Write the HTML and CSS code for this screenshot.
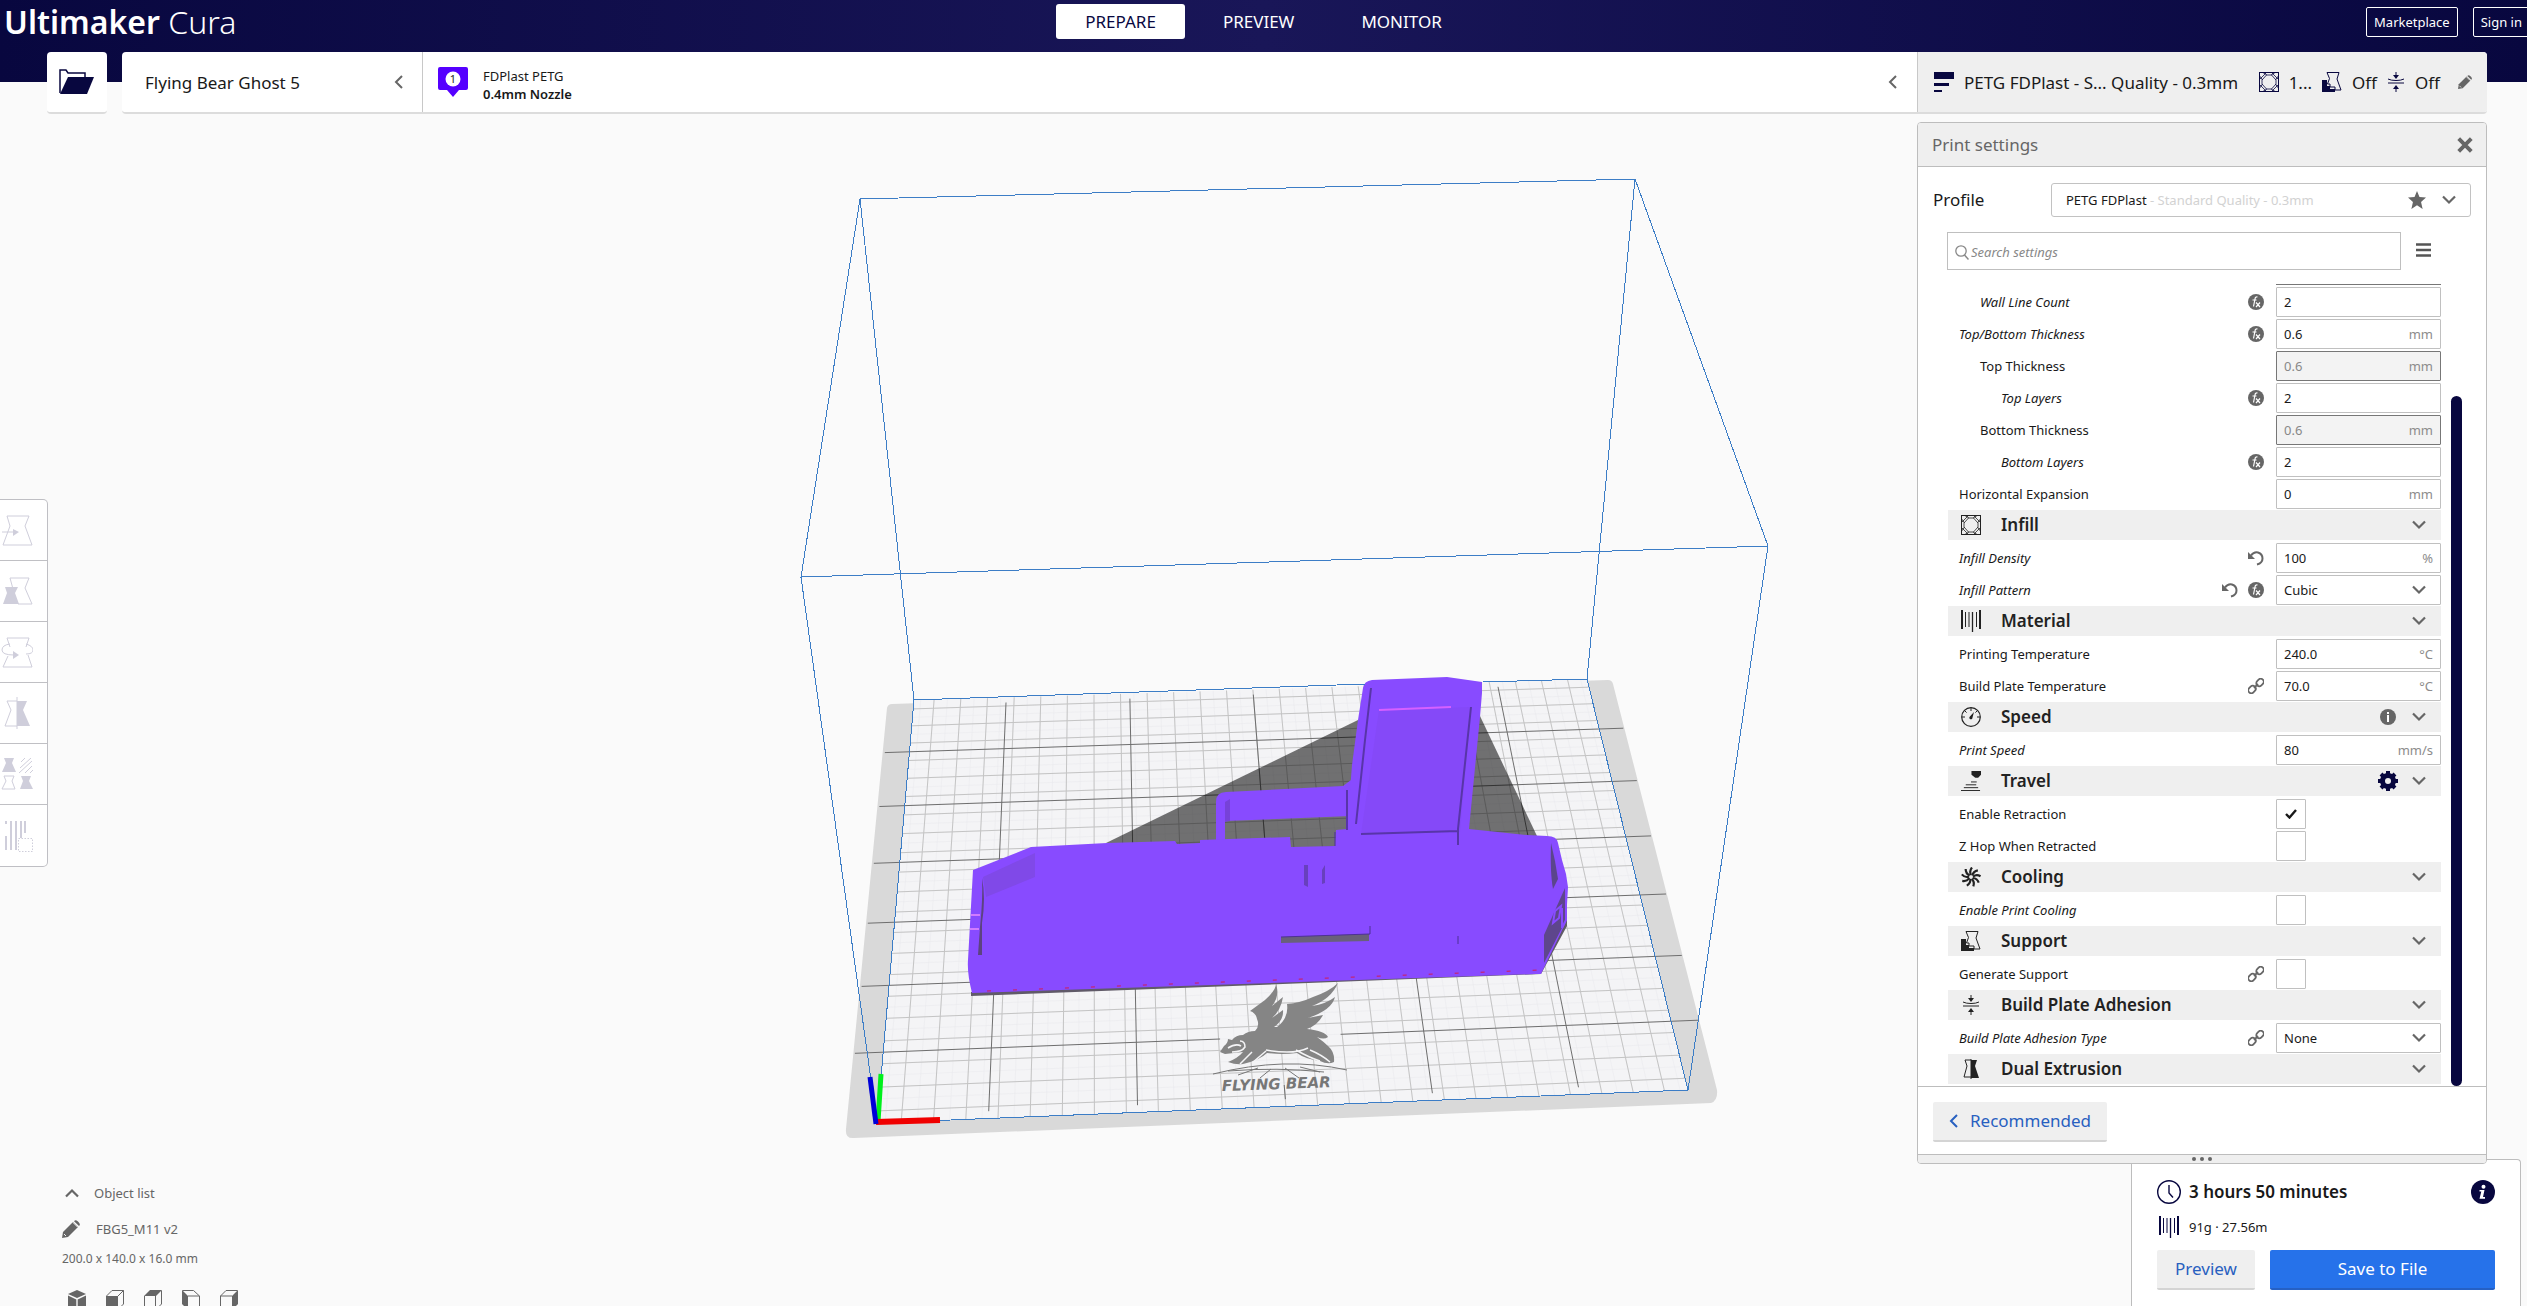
FILE: index.html
```html
<!DOCTYPE html>
<html lang="en">
<head>
<meta charset="utf-8">
<title>Ultimaker Cura</title>
<link rel="stylesheet" href="styles.css">
<script src="scene.js" defer></script>
</head>
<body>
<svg class="sprites" aria-hidden="true">
  <symbol id="i-left" viewBox="0 0 10 14"><path d="M8 1 2 7l6 6" fill="none" stroke="currentColor" stroke-width="2"/></symbol>
  <symbol id="i-down" viewBox="0 0 14 10"><path d="M1 1.500l6 6 6-6" fill="none" stroke="currentColor" stroke-width="2.200"/></symbol>
  <symbol id="i-up" viewBox="0 0 14 10"><path d="M1 8.500l6-6 6 6" fill="none" stroke="currentColor" stroke-width="2.200"/></symbol>
  <symbol id="i-folder" viewBox="0 0 36 26"><path d="M1 24V1h6l2 3h17v4" fill="none" stroke="currentColor" stroke-width="1.500"/><path d="M1 25 9 8h26l-7 17z" fill="currentColor"/></symbol>
  <symbol id="i-pencil" viewBox="0 0 18 18"><path d="M0 18l1-6L11 2l5 5L6 17z" fill="currentColor"/><path d="M12 1.200q1.500-2 3.700 0l1 1q2.200 2.200.3 3.800z" fill="currentColor"/><path d="M11 2.500l4.500 4.500M2 14l2 2" stroke="#f4f4f4" stroke-width="1" /></symbol>
  <symbol id="i-close" viewBox="0 0 14 14"><path d="M1.500 1.500l11 11M12.500 1.500l-11 11" stroke="currentColor" stroke-width="3.400"/></symbol>
  <symbol id="i-quality" viewBox="0 0 20 20"><path d="M0 0h20v7H0zM0 11h15v3H0zM0 18h8v2H0z" fill="currentColor"/></symbol>
  <symbol id="i-infill" viewBox="0 0 20 20"><rect x=".5" y=".5" width="19" height="19" fill="none" stroke="currentColor"/><path d="M7.500 3h5L17 8v4l-4.500 5h-5L3 12V8zM0 8 8 0M12 0l8 8M0 12l8 8M20 12l-8 8M0 3l3.500 5M20 3l-3.500 5M0 17l3.500-5M20 17l-3.500-5M3 0l5 3M17 0l-5 3M3 20l5-3M17 20l-5-3" fill="none" stroke="currentColor" stroke-width=".8"/></symbol>
  <symbol id="i-material" viewBox="0 0 20 22"><path d="M1 0v19M19 0v19" stroke="currentColor" stroke-width="2"/><path d="M4.500 2v15M8 2v15M15.500 2v15" stroke="currentColor" stroke-width="1"/><path d="M11.500 2v20" stroke="currentColor" stroke-width="1.300"/></symbol>
  <symbol id="i-speed" viewBox="0 0 20 20"><circle cx="10" cy="10" r="9.300" fill="none" stroke="currentColor" stroke-width="1.200"/><path d="M10 1v3M3.600 3.600l2 2M16.400 3.600l-2 2M1 10h3M16 10h3" stroke="currentColor"/><path d="M13 5l-1.500 5.500a1.600 1.600 0 1 1-2.600-1z" fill="currentColor"/></symbol>
  <symbol id="i-travel" viewBox="0 0 21 21"><path d="M11 0h10v4l-3 3h-3l-4-3z" fill="currentColor"/><path d="M10.500 11.500h6M5 14.500h11M3 17.500h15M0 20.500h20" stroke="currentColor"/></symbol>
  <symbol id="i-cooling" viewBox="-10 -10 20 20"><g fill="none" stroke="currentColor" stroke-width="2.200"><path d="M0-2Q-2-6 1-9.500"/><path d="M0-2Q-2-6 1-9.500" transform="rotate(40)"/><path d="M0-2Q-2-6 1-9.500" transform="rotate(80)"/><path d="M0-2Q-2-6 1-9.500" transform="rotate(120)"/><path d="M0-2Q-2-6 1-9.500" transform="rotate(160)"/><path d="M0-2Q-2-6 1-9.500" transform="rotate(200)"/><path d="M0-2Q-2-6 1-9.500" transform="rotate(240)"/><path d="M0-2Q-2-6 1-9.500" transform="rotate(280)"/><path d="M0-2Q-2-6 1-9.500" transform="rotate(320)"/></g></symbol>
  <symbol id="i-support" viewBox="0 0 20 20"><path d="M0 8h5v6h3v3h5v3H0z" fill="currentColor"/><path d="M5 .5h12l-2 6.500 4 11h-6v-3H8v-3H5.500l2-5.500z" fill="none" stroke="currentColor"/></symbol>
  <symbol id="i-adhesion" viewBox="0 0 18 20"><path d="M9 0v4M9 16v4" stroke="currentColor"/><path d="M6 3h6L9 7zM6 17h6l-3-4z" fill="currentColor"/><path d="M1 7q3 1.500 8 1.500T17 7M1 11h16" fill="none" stroke="currentColor"/></symbol>
  <symbol id="i-dual" viewBox="0 0 20 20"><path d="M10 1H4l2 6-3 11h7" fill="none" stroke="currentColor"/><path d="M10 1h6l-2 6 4 12h-8zM9.500 0h1v20h-1z" fill="currentColor"/></symbol>
  <symbol id="i-fx" viewBox="0 0 16 16"><circle cx="8" cy="8" r="8" fill="currentColor"/><path d="M9.500 3Q7.300 2.500 7 5L5.500 12.500M4.500 6H8.500M8 8.500l4 4.500M12 8.500l-4 4.500" fill="none" stroke="#fff" stroke-width="1.200"/></symbol>
  <symbol id="i-reset" viewBox="0 0 16 16"><path d="M3 5.500Q6 1.500 10 2.500q4.500 1.500 4.500 6T9 14.500" fill="none" stroke="currentColor" stroke-width="2"/><path d="M0 2v7h7z" fill="currentColor"/></symbol>
  <symbol id="i-link" viewBox="0 0 16 16"><g fill="none" stroke="currentColor" stroke-width="1.800"><rect x="8" y="1.500" width="8" height="6" rx="3" transform="rotate(-45 12 4.500)"/><rect x="0" y="8.500" width="8" height="6" rx="3" transform="rotate(-45 4 11.500)"/><path d="M6 10l4-4"/></g></symbol>
  <symbol id="i-info" viewBox="0 0 16 16"><circle cx="8" cy="8" r="8" fill="currentColor"/><path d="M7 3h2v2H7zM7 6h2v7H7z" fill="#fff"/></symbol>
  <symbol id="i-infob" viewBox="0 0 24 24"><circle cx="12" cy="12" r="12" fill="currentColor"/><circle cx="12.500" cy="6.700" r="2" fill="#fff"/><path d="M8.500 10h5l-1.500 7h2v1.800H8.500L10.300 11.500H8.500z" fill="#fff"/></symbol>
  <symbol id="i-gear" viewBox="-10 -10 20 20"><circle r="5.500" fill="none" stroke="currentColor" stroke-width="5"/><path d="M0-10v4M0 10V6M-10 0h4M10 0H6M-7-7l3 3M7-7 4-4M-7 7l3-3M7 7 4 4" stroke="currentColor" stroke-width="4"/></symbol>
  <symbol id="i-star" viewBox="0 0 16 16"><path d="M8 0l2.200 5.400 5.800.4-4.400 3.900L13 16l-5-3.300L3 16l1.400-6.300L0 5.800l5.800-.4z" fill="currentColor"/></symbol>
  <symbol id="i-search" viewBox="0 0 14 15"><circle cx="6" cy="6" r="5.200" fill="none" stroke="currentColor" stroke-width="1.300"/><path d="M9.500 10l4 4.500" stroke="currentColor" stroke-width="1.500"/></symbol>
  <symbol id="i-menu" viewBox="0 0 15 14"><path d="M0 1.500h15M0 7h15M0 12.500h15" stroke="currentColor" stroke-width="2.400"/></symbol>
  <symbol id="i-clock" viewBox="0 0 24 24"><circle cx="12" cy="12" r="11.300" fill="none" stroke="currentColor" stroke-width="1.400"/><path d="M12 5v8l4 4.500" fill="none" stroke="currentColor" stroke-width="1.400"/></symbol>
  <symbol id="i-check" viewBox="0 0 12 10"><path d="M1 5l3.500 3.500L11 1" fill="none" stroke="currentColor" stroke-width="2.400"/></symbol>
  <symbol id="t-move" viewBox="0 0 32 32"><path d="M6 2h22l-4 10 7 19H2L9 12z" fill="none" stroke="currentColor"/><path d="M1 18h12" stroke="currentColor"/><path d="M12 15l6 3-6 4z" fill="currentColor"/></symbol>
  <symbol id="t-scale" viewBox="0 0 32 32"><path d="M12 14 9 3h19l-4 10 7 16H17" fill="none" stroke="currentColor"/><path d="M4 12h13l-3 6 4 11H2l4-11z" fill="currentColor"/></symbol>
  <symbol id="t-rotate" viewBox="0 0 32 32"><path d="M9 11 6 2h22l-3 9M7 20 2 31h29l-4-12M9 8Q1 9 1 14t12 5M25 8q7 2 7 6t-7 4" fill="none" stroke="currentColor"/><path d="M12 15l6 4-6 4z" fill="currentColor"/></symbol>
  <symbol id="t-mirror" viewBox="0 0 32 32"><path d="M16 4H6l4 9-6 16h12M16 0v32" fill="none" stroke="currentColor"/><path d="M16 4h10l-4 9 7 16H16z" fill="currentColor"/></symbol>
  <symbol id="t-mesh" viewBox="0 0 32 32"><path d="M3 0h10l-2 5 4 9H1l4-9zM20 18h10l-2 5 4 8H19l3-8z" fill="currentColor"/><path d="M3 18h10l-2 5 3 8H1l4-8zM20 4l4-4M19 10 30 0M18 15 31 3M24 15l7-7M29 15l3-3" fill="none" stroke="currentColor"/></symbol>
  <symbol id="t-block" viewBox="0 0 32 32"><path d="M5 1v3M5 16v14M10 1v29M15 1v29M20 1v17M24 1v12" stroke="currentColor" stroke-width="2"/><path d="M17.500 18.500h14v13h-14z" fill="none" stroke="currentColor" stroke-dasharray="1.500 1.500"/></symbol>
  <symbol id="c-3d" viewBox="0 0 18 20"><path d="M9 0l9 4-9 4-9-4zM0 5.500l8.300 4V20L0 16zM18 5.500l-8.300 4V20L18 16z" fill="currentColor"/></symbol>
  <symbol id="c-front" viewBox="0 0 18 20"><path d="M0 6h12v14H0z" fill="currentColor"/><path d="M.5 6 6 .5h11.500L12 6M17.500.5V14L12 19.500" fill="none" stroke="currentColor"/></symbol>
  <symbol id="c-top" viewBox="0 0 18 20"><path d="M0 6 6 0h12l-6 6z" fill="currentColor"/><path d="M.5 6v13.500h11V6M17.500.5V14L12 19.500" fill="none" stroke="currentColor"/></symbol>
  <symbol id="c-left" viewBox="0 0 18 20"><path d="M0 0l6 6v14l-6-6z" fill="currentColor"/><path d="M.5.500h11L17.500 6H6M17.500 6v13.500H6" fill="none" stroke="currentColor"/></symbol>
  <symbol id="c-right" viewBox="0 0 18 20"><path d="M18 0l-6 6v14l6-6z" fill="currentColor"/><path d="M.5 6 6 .5h11.500M.5 6v13.500H12M.5 6H12" fill="none" stroke="currentColor"/></symbol>
</svg>

<svg class="scene" viewBox="0 0 2527 1306" preserveAspectRatio="xMidYMin slice" role="img" aria-label="Build plate with loaded model">
  <path d="M892 704 1608 680q4 0 5 4L1717 1090q1 11-6 13L854 1138q-9 1-8-9L887 708q1-4 5-4z" fill="#d9d9d9"/>
  <path d="M877 1123 1688 1090 1587 679 914 700z" fill="#f4f4f6"/>
  <path id="grid-fine" class="fine"/>
  <path id="grid-thin" class="thin"/>
  <path id="grid-thick" class="thick"/>
  <g class="bear">
    <path d="M1276 984Q1276 990 1265 1000L1250 1011Q1256 1013 1257 1019 1260 1026 1255 1031 1248 1031 1243 1035 1236 1035 1232 1040L1228 1039Q1228 1043 1224 1046L1220 1052 1225 1054 1243 1052Q1238 1058 1228 1062 1236 1065 1243 1064 1260 1060 1267 1053 1282 1055 1297 1053 1305 1059 1320 1061 1328 1065 1334 1062 1335 1052 1328 1046 1324 1042 1317 1037 1324 1040 1328 1037 1325 1031 1307 1029 1318 1025 1323 1015L1308 1018Q1332 1010 1335 997 1326 1004 1312 1006 1331 999 1338 983 1330 991 1313 997 1300 1003 1287 1004 1289 1018 1277 1027H1274Q1284 1020 1283 1010L1272 1018Q1281 1010 1283 997L1272 1006Q1280 996 1276 984z"/>
    <path d="M1228 1048q8-5 13-2M1232 1052q10 0 13-5 0-6-5-6M1240 1064l12-12M1252 1063l14-12M1266 1050q28 5 42-2M1296 1050q14 8 24 11M1310 1050q12 5 20 12" fill="none" stroke="#f4f4f6" stroke-width="1.500"/>
    <path d="M1213 1074q72-18 134-4M1228 1071q50-4 96 1M1238 1075l20-7M1260 1078l11-9M1285 1068l14 10M1300 1067l20 5" fill="none" stroke="#777" stroke-width="1"/>
    <text x="1222" y="1091" transform="rotate(-2 1222 1091)">FLYING BEAR</text>
  </g>
  <path d="M1106 843 1358 720 1480 716 1537 836 1290 850z" fill="#000" fill-opacity=".54"/>
  <path d="M971 992v4L1541 974 1567 926V915L1536 968z" fill="#605a68"/>
  <g fill="#884bff">
    <path d="M1216 842V802q0-10 10-10L1343 786l8-6v36L1225 821v21z"/>
    <path d="M973 870 1031 847 1107 843 1175 841 1177 844 1200 843V840L1290 837 1291 847 1335 846 1336 830 1347 829 1352 765 1358 720 1363 688q1-7 9-8L1447 677 1482 682V693L1480 717 1469 829 1527 835 1547 836q10 0 11 7l4 17 4 14 2 13-2 35-25 52-5 0L972 993q-5-20-4-33z"/>
  </g>
  <path d="M983 877l52-24v24l-49 20z" fill="#8049e8"/>
  <path d="M982 878q4 20 0 45l0 32h-4l2-28q3-28 2-49z" fill="#5c4380"/>
  <path d="M971 915h9M970 929h9" stroke="#d17bff" stroke-width="2"/>
  <path d="M1379 710l92-3-11 125-99 2z" fill="#8549f8"/>
  <path d="M1371 688 1365 740 1356 824M1471 707 1458 829V845M1361 834 1458 831M1347 790V830" fill="none" stroke="#5835a8" stroke-width="2"/>
  <path d="M1379 710 1451 707" stroke="#d660ff" stroke-width="2"/>
  <path d="M1225 802v20l5-1v-22z" fill="#7742d8"/>
  <path d="M1281 937 1369 934V941L1281 943z" fill="#69607a"/>
  <path d="M1281 937 1370 934V926M1458 936v8M1335 832v14" stroke="#4d3195" stroke-width="1" fill="none"/>
  <path d="M1304 865v20l4 2v-22zM1325 865l-3 5v14l3-1z" fill="#6840bd"/>
  <path d="M1551 843q-1 30 2 46l5-10-3-18z" fill="#5b458c"/>
  <path d="M1565 888 1544 935v28l22-43z" fill="#5e468c"/>
  <path d="M1566 888v32l-4 8 0-20M1561 906l-2 12-6 5 2-12z" stroke="#884bff" stroke-width="2" fill="none"/>
  <path d="M987 991 1540 970" stroke="#d01c58" stroke-width="1" stroke-dasharray="4 22"/>
  <path class="volume" d="M860 199 1635 179 1768 546 801 577zM877 1123 1688 1090 1587 679M1365 684 914 700 877 1123 801 577M860 199 914 700M1635 179 1587 679 1483 682M1768 546 1688 1090"/>
  <path d="M878 1122 881 1074" stroke="#00f01c" stroke-width="5"/>
  <path d="M876 1122 940 1120" stroke="#f00000" stroke-width="6"/>
  <path d="M876 1124 870 1077" stroke="#0000d8" stroke-width="5"/>
</svg>

<header class="top">
  <h1 class="brand"><b>Ultimaker</b> Cura</h1>
  <nav class="tabs">
    <button class="tab active">PREPARE</button>
    <button class="tab">PREVIEW</button>
    <button class="tab">MONITOR</button>
  </nav>
  <div class="account">
    <button>Marketplace</button>
    <button>Sign in</button>
  </div>
</header>

<section class="stagebar">
  <button class="open" aria-label="Open file"><svg width="36" height="26"><use href="#i-folder"/></svg></button>
  <div class="selectors">
    <button class="machine"><span>Flying Bear Ghost 5</span><svg width="10" height="14"><use href="#i-left"/></svg></button>
    <button class="config">
      <svg class="extruder" width="30" height="30" viewBox="0 0 30 30"><path d="M2 0h26q2 0 2 2v19q0 2-2 2h-7l-6 7-6-7H2q-2 0-2-2V2q0-2 2-2z" fill="#5500ff"/><circle cx="15" cy="12" r="7.500" fill="#fff"/><text x="15" y="16" text-anchor="middle">1</text></svg>
      <span class="material"><span>FDPlast PETG</span><b>0.4mm Nozzle</b></span>
      <svg width="10" height="14"><use href="#i-left"/></svg>
    </button>
    <button class="summary">
      <svg width="20" height="20"><use href="#i-quality"/></svg>
      <span class="quality">PETG FDPlast - S... Quality - 0.3mm</span>
      <svg width="20" height="20"><use href="#i-infill"/></svg><span>1...</span>
      <svg width="20" height="20"><use href="#i-support"/></svg><span>Off</span>
      <svg width="18" height="20"><use href="#i-adhesion"/></svg><span>Off</span>
      <svg class="edit" width="14" height="14"><use href="#i-pencil"/></svg>
    </button>
  </div>
</section>

<main class="workspace">
  <div class="left">
    <div class="tools">
      <button aria-label="Move"><svg><use href="#t-move"/></svg></button>
      <button aria-label="Scale"><svg><use href="#t-scale"/></svg></button>
      <button aria-label="Rotate"><svg><use href="#t-rotate"/></svg></button>
      <button aria-label="Mirror"><svg><use href="#t-mirror"/></svg></button>
      <button aria-label="Per model settings"><svg><use href="#t-mesh"/></svg></button>
      <button aria-label="Support blocker"><svg><use href="#t-block"/></svg></button>
    </div>
    <div class="objects">
      <button class="objtoggle"><svg width="14" height="10"><use href="#i-up"/></svg>Object list</button>
      <button class="objname"><svg width="18" height="18"><use href="#i-pencil"/></svg>FBG5_M11 v2</button>
      <p>200.0 x 140.0 x 16.0 mm</p>
      <div class="views">
        <button aria-label="3D view"><svg><use href="#c-3d"/></svg></button>
        <button aria-label="Front view"><svg><use href="#c-front"/></svg></button>
        <button aria-label="Top view"><svg><use href="#c-top"/></svg></button>
        <button aria-label="Left view"><svg><use href="#c-left"/></svg></button>
        <button aria-label="Right view"><svg><use href="#c-right"/></svg></button>
      </div>
    </div>
  </div>

  <div class="right">
    <section class="panel">
      <header class="panelhead"><h2>Print settings</h2><button aria-label="Close"><svg width="16" height="16"><use href="#i-close"/></svg></button></header>
      <div class="profile">
        <span>Profile</span>
        <button class="combo"><span>PETG FDPlast <i>- Standard Quality - 0.3mm</i></span><svg width="18" height="18"><use href="#i-star"/></svg><svg width="14" height="10"><use href="#i-down"/></svg></button>
      </div>
      <div class="find">
        <label class="search"><svg width="14" height="15"><use href="#i-search"/></svg><input type="text" placeholder="Search settings" aria-label="Search settings"></label>
        <button aria-label="Setting visibility"><svg width="15" height="14"><use href="#i-menu"/></svg></button>
      </div>
      <div class="scroll">
        <div class="list">
          <div class="clipped"></div>
          <div class="row l1 it"><label for="f1">Wall Line Count</label><svg><use href="#i-fx"/></svg><span class="field"><input id="f1" value="2"></span></div>
          <div class="row it"><label for="f2">Top/Bottom Thickness</label><svg><use href="#i-fx"/></svg><span class="field"><input id="f2" value="0.6"><span>mm</span></span></div>
          <div class="row l1"><label for="f3">Top Thickness</label><span class="field off"><input id="f3" value="0.6" disabled><span>mm</span></span></div>
          <div class="row l2 it"><label for="f4">Top Layers</label><svg><use href="#i-fx"/></svg><span class="field"><input id="f4" value="2"></span></div>
          <div class="row l1"><label for="f5">Bottom Thickness</label><span class="field off"><input id="f5" value="0.6" disabled><span>mm</span></span></div>
          <div class="row l2 it"><label for="f6">Bottom Layers</label><svg><use href="#i-fx"/></svg><span class="field"><input id="f6" value="2"></span></div>
          <div class="row"><label for="f7">Horizontal Expansion</label><span class="field"><input id="f7" value="0"><span>mm</span></span></div>
          <button class="cat"><svg width="20" height="20"><use href="#i-infill"/></svg><span>Infill</span><svg class="chev"><use href="#i-down"/></svg></button>
          <div class="row it"><label for="f8">Infill Density</label><svg><use href="#i-reset"/></svg><span class="field"><input id="f8" value="100"><span>%</span></span></div>
          <div class="row it"><label for="f9">Infill Pattern</label><svg><use href="#i-reset"/></svg><svg><use href="#i-fx"/></svg><span class="field pick"><select id="f9"><option>Cubic</option></select><svg class="chev"><use href="#i-down"/></svg></span></div>
          <button class="cat"><svg width="20" height="22"><use href="#i-material"/></svg><span>Material</span><svg class="chev"><use href="#i-down"/></svg></button>
          <div class="row"><label for="f10">Printing Temperature</label><span class="field"><input id="f10" value="240.0"><span>°C</span></span></div>
          <div class="row"><label for="f11">Build Plate Temperature</label><svg><use href="#i-link"/></svg><span class="field"><input id="f11" value="70.0"><span>°C</span></span></div>
          <button class="cat"><svg width="20" height="20"><use href="#i-speed"/></svg><span>Speed</span><svg class="note" width="16" height="16"><use href="#i-info"/></svg><svg class="chev"><use href="#i-down"/></svg></button>
          <div class="row it"><label for="f12">Print Speed</label><span class="field"><input id="f12" value="80"><span>mm/s</span></span></div>
          <button class="cat"><svg width="20" height="20"><use href="#i-travel"/></svg><span>Travel</span><svg class="gear" width="20" height="20"><use href="#i-gear"/></svg><svg class="chev"><use href="#i-down"/></svg></button>
          <div class="row"><label for="f13">Enable Retraction</label><span class="tick"><input type="checkbox" id="f13" checked><svg width="12" height="10"><use href="#i-check"/></svg></span></div>
          <div class="row"><label for="f14">Z Hop When Retracted</label><span class="tick"><input type="checkbox" id="f14"></span></div>
          <button class="cat"><svg width="20" height="20"><use href="#i-cooling"/></svg><span>Cooling</span><svg class="chev"><use href="#i-down"/></svg></button>
          <div class="row it"><label for="f15">Enable Print Cooling</label><span class="tick"><input type="checkbox" id="f15"></span></div>
          <button class="cat"><svg width="20" height="20"><use href="#i-support"/></svg><span>Support</span><svg class="chev"><use href="#i-down"/></svg></button>
          <div class="row"><label for="f16">Generate Support</label><svg><use href="#i-link"/></svg><span class="tick"><input type="checkbox" id="f16"></span></div>
          <button class="cat"><svg width="20" height="20"><use href="#i-adhesion"/></svg><span>Build Plate Adhesion</span><svg class="chev"><use href="#i-down"/></svg></button>
          <div class="row it"><label for="f17">Build Plate Adhesion Type</label><svg><use href="#i-link"/></svg><span class="field pick"><select id="f17"><option>None</option></select><svg class="chev"><use href="#i-down"/></svg></span></div>
          <button class="cat"><svg width="20" height="20"><use href="#i-dual"/></svg><span>Dual Extrusion</span><svg class="chev"><use href="#i-down"/></svg></button>
        </div>
        <div class="thumb"></div>
      </div>
      <footer class="mode"><button class="secondary"><svg width="10" height="14"><use href="#i-left"/></svg>Recommended</button></footer>
      <div class="grip"><i></i><i></i><i></i></div>
    </section>

    <section class="job">
      <div class="time"><svg width="24" height="24"><use href="#i-clock"/></svg><b>3 hours 50 minutes</b><button aria-label="Details"><svg width="24" height="24"><use href="#i-infob"/></svg></button></div>
      <div class="usage"><svg width="24" height="22"><use href="#i-material"/></svg><span>91g · 27.56m</span></div>
      <div class="actions"><button class="secondary">Preview</button><button class="primary">Save to File</button></div>
    </section>
  </div>
</main>
</body>
</html>
```
FILE: styles.css
```css
* { box-sizing: border-box; }
body {
  margin: 0;
  height: 100vh;
  display: flex;
  flex-direction: column;
  position: relative;
  overflow: hidden;
  background: #fafafa;
  color: #191919;
  font: 13px/18px "Noto Sans", "Open Sans", sans-serif;
}
button, input, select { font: inherit; color: inherit; margin: 0; }
button { border: 0; padding: 0; background: none; text-align: left; }
svg { flex: none; display: block; }
h1, h2, p { margin: 0; font-weight: 400; }
.sprites { position: absolute; width: 0; height: 0; }

/* 3D view behind everything */
.scene { position: absolute; inset: 0; width: 100%; height: 100%; }
.fine { fill: none; stroke: #e9e9ee; stroke-width: 1; opacity: .5; }
.thin { fill: none; stroke: #c4c4c4; stroke-width: 1; }
.thick { fill: none; stroke: #6e6e6e; stroke-width: 1; }
.bear { fill: #858585; }
.bear text { font: italic bold 15px "DejaVu Sans", sans-serif; fill: #777; }
.volume { fill: none; stroke: #3c7dc6; stroke-width: 1; shape-rendering: crispEdges; }

/* Top bar */
.top {
  position: relative;
  height: 82px;
  flex: none;
  display: grid;
  grid-template-columns: 1fr auto 1fr;
  align-items: start;
  background: linear-gradient(90deg, #08073f, #191658 50%, #08073f);
  color: #fff;
}
.brand { padding-left: 4px; font-size: 32px; line-height: 44px; font-weight: 300; }
.brand b { font-weight: 600; }
.tabs { display: flex; gap: 9px; padding-top: 4px; }
.tab { height: 35px; padding: 0 29px; font-size: 17px; border-radius: 3px; }
.tab.active { background: #fff; color: #08073f; }
.account { display: flex; justify-content: flex-end; gap: 15px; margin-right: -3px; padding-top: 7px; }
.account button { height: 30px; padding: 0 7px; border: 1px solid #fff; border-radius: 2px; }

/* Selector bar */
.stagebar { position: relative; flex: none; display: flex; gap: 15px; height: 62px; margin: -30px 40px 0 47px; }
.open {
  width: 60px; display: grid; place-items: center; background: #fff; color: #08073f;
  border-bottom: 2px solid #dcdcdc; border-radius: 4px;
}
.selectors { flex: 1; display: flex; border-radius: 4px; overflow: hidden; background: #fff; border-bottom: 2px solid #dcdcdc; }
.selectors > button { display: flex; align-items: center; }
.selectors svg { color: #666; }
.selectors span { padding-top: 1px; }
.machine { width: 301px; padding: 0 18px 0 23px; justify-content: space-between; font-size: 17px; border-right: 1px solid #c8c8c8; }
.config { flex: 1; padding: 0 19px 0 15px; gap: 15px; }
.config .material { flex: 1; display: flex; flex-direction: column; padding-top: 4px; }
.config b { font-weight: 600; }
.extruder text { font-size: 11px; fill: #222; }
.summary { width: 570px; padding: 0 15px 0 16px; gap: 10px; background: #efefef; border-left: 1px solid #c8c8c8; font-size: 17px; }
.summary svg { color: #08073f; }
.summary .quality { flex: 1; white-space: nowrap; }
.summary .edit { color: #666; margin-left: 8px; }

/* Workspace */
.workspace { position: relative; flex: 1; min-height: 0; display: flex; justify-content: space-between; padding-top: 8px; }
.left { display: flex; flex-direction: column; justify-content: space-between; align-items: flex-start; padding-top: 377px; }
.tools { background: #fff; border: 1px solid #bfbfc4; border-left: 0; border-radius: 0 5px 5px 0; width: 48px; overflow: hidden; }
.tools button { display: flex; align-items: center; width: 100%; height: 61px; padding-left: 1px; color: #cfcedb; border-bottom: 1px solid #c0c0c4; }
.tools button:last-child { border: 0; }
.tools svg { width: 32px; height: 32px; }
.objects { padding-left: 62px; color: #666; margin-bottom: -4px; }
.objects button { display: flex; align-items: center; height: 36px; }
.objtoggle { gap: 15px; padding-left: 3px; }
.objname { gap: 16px; }
.objects p { line-height: 24px; font-size: 12px; }
.views { display: flex; gap: 20px; padding: 19px 0 0 6px; }
.views button { height: 20px; }
.views svg { width: 18px; height: 20px; }

.right { display: flex; flex-direction: column; align-items: flex-end; }
.panel { position: relative; z-index: 1; flex: none; width: 570px; margin-right: 40px; background: #fff; border: 1px solid #bdbdbd; border-radius: 4px; overflow: hidden; }
.panelhead { display: flex; justify-content: space-between; align-items: center; height: 44px; padding: 0 13px 0 14px; background: #efefef; border-bottom: 1px solid #bdbdbd; color: #666; }
h2 { font-size: 17px; line-height: 22px; }
.profile { display: flex; justify-content: space-between; align-items: center; padding: 16px 15px 0 15px; font-size: 17px; }
.combo { display: flex; align-items: center; gap: 16px; width: 420px; height: 34px; padding: 0 14px; font-size: 13px; border: 1px solid #c2c2c2; border-radius: 3px; }
.combo span { flex: 1; }
.combo i { font-style: normal; color: #d2d2d2; }
.combo svg { color: #666; }
.find { display: flex; gap: 15px; padding: 15px 0 0 29px; }
.find button { color: #555; height: 36px; }
.search { display: flex; align-items: center; gap: 2px; width: 454px; height: 38px; padding: 2px 7px 0; border: 1px solid #bfbfbf; color: #888; }
.search input { flex: 1; border: 0; outline: 0; padding: 0; font-style: italic; background: none; }
.search input::placeholder { color: #888; opacity: 1; }

.scroll { display: flex; gap: 10px; padding: 14px 24px 0 30px; border-bottom: 1px solid #bdbdbd; }
.list { flex: 1; }
.thumb { width: 11px; margin-top: 112px; border-radius: 6px; background: #08073f; }
.clipped { width: 165px; height: 2px; margin-left: auto; border-top: 1px solid #777; }
.row { display: flex; align-items: center; height: 32px; padding-left: 11px; }
.row.l1 { padding-left: 32px; }
.row.l2 { padding-left: 53px; }
.row.it label { font-style: italic; }
.row label { flex: 1; }
.row > svg { width: 16px; height: 16px; margin-right: 10px; color: #666; }
.row > svg:nth-last-child(2) { margin-right: 12px; }
.field { display: flex; align-items: center; width: 165px; height: 30px; padding: 0 7px; border: 1px solid #c0c0c0; border-radius: 1px; background: #fff; }
.field.off { background: #f3f3f3; border-color: #777; }
.field.off input { color: #888; }
.field input, .field select { flex: 1; width: 0; min-width: 0; border: 0; padding: 0; outline: 0; background: none; appearance: none; }
.field > span { color: #8c8c8c; }
.pick { padding-right: 14px; }
.chev { width: 14px; height: 10px; color: #666; }
.tick { display: grid; place-items: center; width: 30px; height: 30px; margin-right: 135px; }
.tick > * { grid-area: 1 / 1; }
.tick input { appearance: none; width: 30px; height: 30px; border: 1px solid #c0c0c0; border-radius: 1px; background: #fff; }
.tick svg { position: relative; }
.cat { display: flex; align-items: center; width: 100%; height: 30px; margin-bottom: 2px; padding: 0 15px 0 13px; background: #efefef; font-size: 17px; font-weight: 600; color: #222; }
.cat > span { flex: 1; padding-left: 20px; }
.cat .note { margin-right: 16px; color: #666; }
.cat .gear { margin-right: 14px; color: #08073f; }

.mode { padding: 15px 15px 12px; }
.secondary, .primary { height: 40px; border-radius: 2px; font-size: 17px; }
.secondary { display: flex; align-items: center; justify-content: center; gap: 11px; padding: 0 16px; background: #efefef; border-bottom: 2px solid #d4d4d4; color: #2860c0; }
.grip { display: flex; justify-content: center; align-items: center; gap: 4px; height: 9px; background: #efefef; border-top: 1px solid #bdbdbd; }
.grip i { width: 4px; height: 4px; border-radius: 2px; background: #666; }

.job { flex: 1 0 auto; width: 390px; margin: -5px 6px 0 0; padding: 20px 25px 0; background: #fff; border: 1px solid #bdbdbd; border-bottom: 0; border-radius: 4px 4px 0 0; }
.time, .usage { display: flex; align-items: center; gap: 8px; color: #08073f; }
.time b { flex: 1; font-size: 17px; font-weight: 600; color: #191919; }
.usage { height: 22px; margin-top: 12px; }
.usage span { color: #191919; }
.actions { display: flex; gap: 15px; margin-top: 12px; }
.actions .secondary { width: 98px; }
.primary { flex: 1; background: #2672ea; border-bottom: 2px solid #2560c4; color: #fff; text-align: center; }
```
FILE: scene.js
```js
// Build plate size in millimetres and the screen position of its corners.
const W = 255, D = 210;
const [p0, p1, p2, p3] = [[877, 1123], [1688, 1090], [1587, 679], [914, 700.5]];

// Projective map from plate coordinates to the view.
const dx1 = p1[0] - p2[0], dx2 = p3[0] - p2[0], dx3 = p0[0] - p1[0] + p2[0] - p3[0];
const dy1 = p1[1] - p2[1], dy2 = p3[1] - p2[1], dy3 = p0[1] - p1[1] + p2[1] - p3[1];
const det = dx1 * dy2 - dx2 * dy1;
const g = (dx3 * dy2 - dx2 * dy3) / det;
const h = (dx1 * dy3 - dx3 * dy1) / det;

function at(x, y) {
  const u = x / W, v = y / D, w = g * u + h * v + 1;
  const c = i => ((p1[i] - p0[i] + g * p1[i]) * u + (p3[i] - p0[i] + h * p3[i]) * v + p0[i]) / w;
  return c(0).toFixed(1) + " " + c(1).toFixed(1);
}
const line = (x1, y1, x2, y2) => "M" + at(x1, y1) + "L" + at(x2, y2);

let fine = "", thin = "", thick = "";
for (let x = 2.5; x < W; x += 5) fine += line(x, 0, x, D);
for (let y = 0; y < D; y += 5) fine += line(0, y, W, y);
for (let x = 7.5; x < W; x += 10) thin += line(x, 0, x, D);
for (let y = 5; y < D; y += 10) thin += line(0, y, W, y);
for (const x of [34.5, 81, 174, 220.5]) thick += line(x, 3, x, 207);
thick += line(127.5, 3, 127.5, 9) + line(127.5, 60, 127.5, 207);
thick += line(-9, 30, 108, 30) + line(147, 30, 264, 30);
for (const y of [60, 90, 120, 150, 180]) thick += line(-9, y, 264, y);

document.getElementById("grid-fine").setAttribute("d", fine);
document.getElementById("grid-thin").setAttribute("d", thin);
document.getElementById("grid-thick").setAttribute("d", thick);
```
